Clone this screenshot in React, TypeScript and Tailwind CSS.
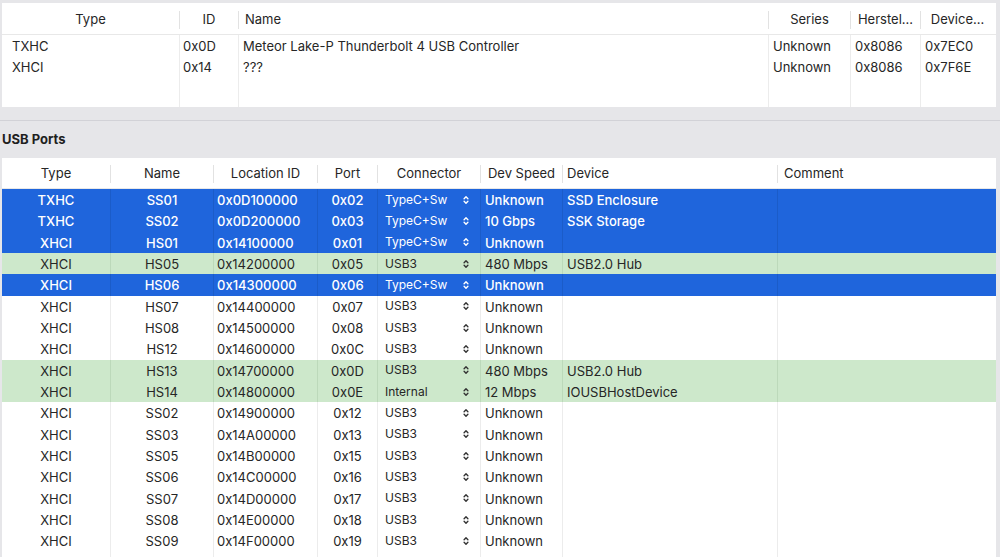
// @ts-nocheck
import React from 'react';

type Port = {
  type: string;
  name: string;
  loc: string;
  port: string;
  conn: string;
  speed: string;
  device: string;
  hl?: 'sel' | 'ok';
};

const controllers = [
  { type: 'TXHC', id: '0x0D', name: 'Meteor Lake-P Thunderbolt 4 USB Controller', series: 'Unknown', vendor: '0x8086', device: '0x7EC0' },
  { type: 'XHCI', id: '0x14', name: '???', series: 'Unknown', vendor: '0x8086', device: '0x7F6E' },
];

const ports: Port[] = [
  { type: 'TXHC', name: 'SS01', loc: '0x0D100000', port: '0x02', conn: 'TypeC+Sw', speed: 'Unknown', device: 'SSD Enclosure', hl: 'sel' },
  { type: 'TXHC', name: 'SS02', loc: '0x0D200000', port: '0x03', conn: 'TypeC+Sw', speed: '10 Gbps', device: 'SSK Storage', hl: 'sel' },
  { type: 'XHCI', name: 'HS01', loc: '0x14100000', port: '0x01', conn: 'TypeC+Sw', speed: 'Unknown', device: '', hl: 'sel' },
  { type: 'XHCI', name: 'HS05', loc: '0x14200000', port: '0x05', conn: 'USB3', speed: '480 Mbps', device: 'USB2.0 Hub', hl: 'ok' },
  { type: 'XHCI', name: 'HS06', loc: '0x14300000', port: '0x06', conn: 'TypeC+Sw', speed: 'Unknown', device: '', hl: 'sel' },
  { type: 'XHCI', name: 'HS07', loc: '0x14400000', port: '0x07', conn: 'USB3', speed: 'Unknown', device: '' },
  { type: 'XHCI', name: 'HS08', loc: '0x14500000', port: '0x08', conn: 'USB3', speed: 'Unknown', device: '' },
  { type: 'XHCI', name: 'HS12', loc: '0x14600000', port: '0x0C', conn: 'USB3', speed: 'Unknown', device: '' },
  { type: 'XHCI', name: 'HS13', loc: '0x14700000', port: '0x0D', conn: 'USB3', speed: '480 Mbps', device: 'USB2.0 Hub', hl: 'ok' },
  { type: 'XHCI', name: 'HS14', loc: '0x14800000', port: '0x0E', conn: 'Internal', speed: '12 Mbps', device: 'IOUSBHostDevice', hl: 'ok' },
  { type: 'XHCI', name: 'SS02', loc: '0x14900000', port: '0x12', conn: 'USB3', speed: 'Unknown', device: '' },
  { type: 'XHCI', name: 'SS03', loc: '0x14A00000', port: '0x13', conn: 'USB3', speed: 'Unknown', device: '' },
  { type: 'XHCI', name: 'SS05', loc: '0x14B00000', port: '0x15', conn: 'USB3', speed: 'Unknown', device: '' },
  { type: 'XHCI', name: 'SS06', loc: '0x14C00000', port: '0x16', conn: 'USB3', speed: 'Unknown', device: '' },
  { type: 'XHCI', name: 'SS07', loc: '0x14D00000', port: '0x17', conn: 'USB3', speed: 'Unknown', device: '' },
  { type: 'XHCI', name: 'SS08', loc: '0x14E00000', port: '0x18', conn: 'USB3', speed: 'Unknown', device: '' },
  { type: 'XHCI', name: 'SS09', loc: '0x14F00000', port: '0x19', conn: 'USB3', speed: 'Unknown', device: '' },
];

function UpDown({ light }: { light?: boolean }) {
  return (
    <svg width="6" height="10" viewBox="0 0 6 10" fill="none" className={light ? 'text-white' : 'text-[#333333]'}>
      <path d="M1.1 3.7 L3 1.8 L4.9 3.7" stroke="currentColor" strokeWidth="1.4" strokeLinecap="round" strokeLinejoin="round" />
      <path d="M1.1 6.3 L3 8.2 L4.9 6.3" stroke="currentColor" strokeWidth="1.4" strokeLinecap="round" strokeLinejoin="round" />
    </svg>
  );
}

function HeadSep() {
  return <div className="h-[18px] w-px shrink-0 bg-[#e2e2e2]" />;
}

export default function App() {
  return (
    <div className="h-[557px] w-[1000px] overflow-hidden bg-[#e6e6e9] font-['Inter','Liberation_Sans',sans-serif] text-[13px] text-[#262626]">
      {/* controllers table */}
      <div className="ml-[2px] mt-[3px] flex h-[104px] w-[994px] flex-col bg-white">
        <div className="flex h-[32px] items-center border-b border-[#e8e8e8] pt-[3px]">
          <div className="w-[177px] text-center">Type</div>
          <div className="flex w-[59px] items-center"><HeadSep /><span className="flex-1 text-center">ID</span></div>
          <div className="flex w-[530px] items-center"><HeadSep /><span className="pl-[6px]">Name</span></div>
          <div className="flex w-[82px] items-center"><HeadSep /><span className="flex-1 text-center">Series</span></div>
          <div className="flex w-[70px] items-center"><HeadSep /><span className="flex-1 text-center">Herstel...</span></div>
          <div className="flex w-[76px] items-center"><HeadSep /><span className="flex-1 pr-[2px] text-center">Device...</span></div>
        </div>
        <div className="flex flex-1">
          <div className="w-[177px] pl-[10px]">
            {controllers.map((c) => (
              <div key={c.id} className="flex h-[21.33px] items-center pt-[2px]">{c.type}</div>
            ))}
          </div>
          <div className="w-[59px] border-l border-[#ececec] pl-[3px]">
            {controllers.map((c) => (
              <div key={c.id} className="flex h-[21.33px] items-center pt-[2px]">{c.id}</div>
            ))}
          </div>
          <div className="w-[530px] border-l border-[#ececec] pl-[4px]">
            {controllers.map((c) => (
              <div key={c.id} className="flex h-[21.33px] items-center pt-[2px]">{c.name}</div>
            ))}
          </div>
          <div className="w-[82px] border-l border-[#ececec] pl-[4px]">
            {controllers.map((c) => (
              <div key={c.id} className="flex h-[21.33px] items-center pt-[2px]">{c.series}</div>
            ))}
          </div>
          <div className="w-[70px] border-l border-[#ececec] pl-[4px]">
            {controllers.map((c) => (
              <div key={c.id} className="flex h-[21.33px] items-center pt-[2px]">{c.vendor}</div>
            ))}
          </div>
          <div className="w-[76px] border-l border-[#ececec] pl-[4px]">
            {controllers.map((c) => (
              <div key={c.id} className="flex h-[21.33px] items-center pt-[2px]">{c.device}</div>
            ))}
          </div>
        </div>
      </div>

      <div className="mt-[13px] h-px bg-[#d2d2d7]" />

      <div className="h-[37px] pl-[2px] pt-[10px] font-bold leading-[16px] text-[#1f1f1f]">USB Ports</div>

      {/* ports table */}
      <div className="ml-[2px] w-[994px] bg-white">
        <div className="flex h-[31px] items-center border-b border-[#e8e8e8] pt-[2px]">
          <div className="w-[108px] text-center">Type</div>
          <div className="flex w-[103px] items-center"><HeadSep /><span className="flex-1 text-center">Name</span></div>
          <div className="flex w-[104px] items-center"><HeadSep /><span className="flex-1 text-center">Location ID</span></div>
          <div className="flex w-[60px] items-center"><HeadSep /><span className="flex-1 text-center">Port</span></div>
          <div className="flex w-[103px] items-center"><HeadSep /><span className="flex-1 text-center">Connector</span></div>
          <div className="flex w-[82px] items-center"><HeadSep /><span className="flex-1 text-center">Dev Speed</span></div>
          <div className="flex w-[215px] items-center"><HeadSep /><span className="pl-[4px]">Device</span></div>
          <div className="flex w-[219px] items-center"><HeadSep /><span className="pl-[6px]">Comment</span></div>
        </div>
        {ports.map((p, i) => {
          const sel = p.hl === 'sel';
          const rowCls = sel
            ? 'bg-[#1f65dc] text-white font-medium'
            : p.hl === 'ok'
            ? 'bg-[#cde8cb] text-[#262626]'
            : 'bg-white text-[#262626]';
          const sep = sel ? 'border-[#1b5cc9]' : p.hl === 'ok' ? 'border-[#bcd9ba]' : 'border-[#ececec]';
          return (
            <div key={i} className={`flex h-[21.33px] items-center ${rowCls}`}>
              <div className="flex h-full w-[108px] items-center justify-center pt-[2px]">{p.type}</div>
              <div className={`flex h-full w-[103px] items-center justify-center border-l pt-[2px] ${sep}`}>{p.name}</div>
              <div className={`flex h-full w-[104px] items-center border-l pl-[3px] pt-[2px] ${sep}`}>{p.loc}</div>
              <div className={`flex h-full w-[60px] items-center justify-center border-l pt-[2px] ${sep}`}>{p.port}</div>
              <div className={`flex h-full w-[103px] items-center border-l pl-[7px] pr-[11px] ${sep}`}>
                <span className="flex-1 text-[12px] font-normal">{p.conn}</span>
                <UpDown light={sel} />
              </div>
              <div className={`flex h-full w-[82px] items-center border-l pl-[4px] pt-[2px] ${sep}`}>{p.speed}</div>
              <div className={`flex h-full w-[215px] items-center border-l pl-[4px] pt-[2px] ${sep}`}>{p.device}</div>
              <div className={`h-full w-[219px] border-l ${sep}`} />
            </div>
          );
        })}
        <div className="flex h-[21.33px]">
          <div className="w-[108px]" />
          <div className="w-[103px] border-l border-[#ececec]" />
          <div className="w-[104px] border-l border-[#ececec]" />
          <div className="w-[60px] border-l border-[#ececec]" />
          <div className="w-[103px] border-l border-[#ececec]" />
          <div className="w-[82px] border-l border-[#ececec]" />
          <div className="w-[215px] border-l border-[#ececec]" />
          <div className="w-[219px] border-l border-[#ececec]" />
        </div>
      </div>
    </div>
  );
}
